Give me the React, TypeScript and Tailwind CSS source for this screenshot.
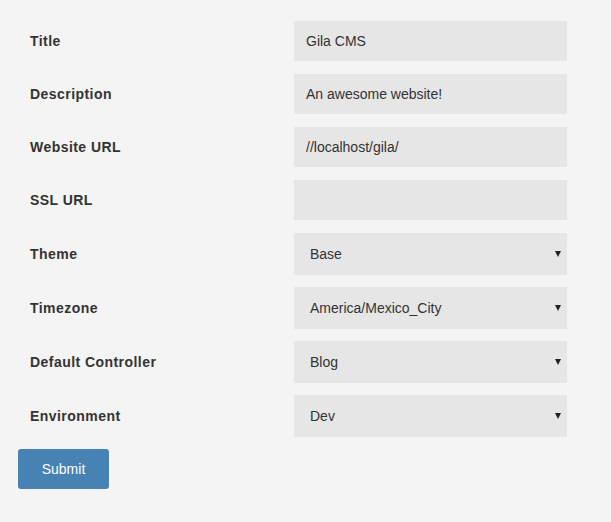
const fields = [
  { label: 'Title', value: 'Gila CMS' },
  { label: 'Description', value: 'An awesome website!' },
  { label: 'Website URL', value: '//localhost/gila/' },
  { label: 'SSL URL', value: '' },
];

const selects = [
  { label: 'Theme', value: 'Base' },
  { label: 'Timezone', value: 'America/Mexico_City' },
  { label: 'Default Controller', value: 'Blog' },
  { label: 'Environment', value: 'Dev' },
];

const App = () => {
  return (
    <div className="min-h-[522px] bg-[#f4f4f4] px-[18px] pt-[21px] font-['Liberation_Sans',Arial,sans-serif] text-[#333]">
      <form onSubmit={(e) => e.preventDefault()}>
        {fields.map((f) => (
          <div key={f.label} className="mb-[13px] flex items-center">
            <label className="w-[276px] pl-3 text-sm font-bold tracking-[0.45px]">{f.label}</label>
            <input
              defaultValue={f.value}
              className="h-10 w-[273px] bg-[#e6e6e6] px-3 text-sm text-[#333] outline-none"
            />
          </div>
        ))}
        {selects.map((s) => (
          <div key={s.label} className="mb-3 flex items-center">
            <label className="w-[276px] pl-3 text-sm font-bold tracking-[0.45px]">{s.label}</label>
            <div className="relative w-[273px]">
              <select
                defaultValue={s.value}
                className="h-[42px] w-full appearance-none bg-[#e6e6e6] pl-4 text-sm text-[#333] outline-none"
              >
                <option>{s.value}</option>
              </select>
              <span className="pointer-events-none absolute right-[6px] top-[18px] h-0 w-0 border-x-[3px] border-t-[6px] border-x-transparent border-t-[#222]" />
            </div>
          </div>
        ))}
        <button
          type="submit"
          className="h-10 w-[91px] rounded-[3px] bg-[#4682b4] text-sm text-white"
        >
          Submit
        </button>
      </form>
    </div>
  );
};

export default App;
